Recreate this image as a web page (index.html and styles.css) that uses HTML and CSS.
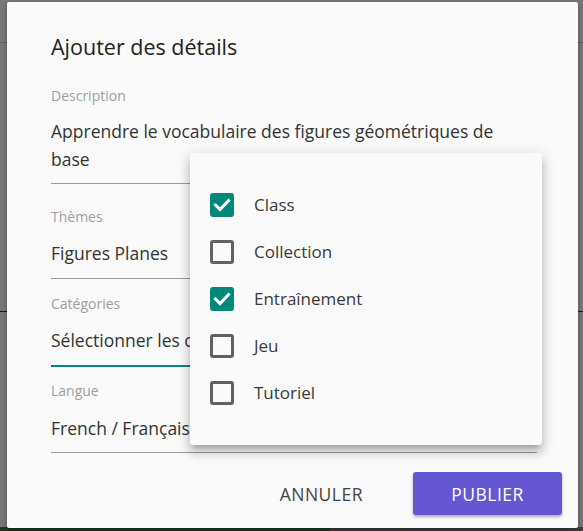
FILE: index.html
```
<!DOCTYPE html>
<html lang="fr">
<head>
<meta charset="utf-8">
<link rel="stylesheet" href="styles.css">
</head>
<body>
<div class="backdrop">
  <div class="bd-header"></div>
  <div class="bd-main"></div>
  <div class="bd-rule"></div>
  <div class="bd-lower"></div>
  <div class="bd-footer"><span class="bd-green"></span></div>
</div>

<div class="dialog">
  <h2 class="title">Ajouter des détails</h2>
  <div class="fields">
    <div class="field field-desc">
      <div class="label">Description</div>
      <div class="value">Apprendre le vocabulaire des figures géométriques de base</div>
    </div>
    <div class="field field-themes">
      <div class="label">Thèmes</div>
      <div class="value">Figures Planes</div>
    </div>
    <div class="field field-cat focused">
      <div class="label">Catégories</div>
      <div class="value">Sélectionner les catégories</div>
    </div>
    <div class="field field-lang">
      <div class="label">Langue</div>
      <div class="value">French / Français</div>
    </div>
  </div>
  <div class="actions">
    <button class="btn btn-text">ANNULER</button>
    <button class="btn btn-primary">PUBLIER</button>
  </div>

  <div class="menu">
    <div class="item"><span class="box checked"><svg viewBox="0 0 24 24"><polyline points="5.5,12 10,16.5 18.5,7.5"/></svg></span><span class="item-text">Class</span></div>
    <div class="item"><span class="box"></span><span class="item-text">Collection</span></div>
    <div class="item"><span class="box checked"><svg viewBox="0 0 24 24"><polyline points="5.5,12 10,16.5 18.5,7.5"/></svg></span><span class="item-text">Entraînement</span></div>
    <div class="item"><span class="box"></span><span class="item-text">Jeu</span></div>
    <div class="item"><span class="box"></span><span class="item-text">Tutoriel</span></div>
  </div>
</div>
</body>
</html>
```
FILE: styles.css
```
* { box-sizing: border-box; }
html, body { margin: 0; padding: 0; }
body {
  width: 583px;
  height: 531px;
  overflow: hidden;
  background: #767676;
  font-family: "Open Sans", "Noto Sans", sans-serif;
  position: relative;
}

/* obscured page behind the scrim */
.backdrop { display: flex; flex-direction: column; height: 531px; }
.bd-header { height: 43px; border-bottom: 1px solid #5e5e5e; background: #777777; }
.bd-main { height: 268px; }
.bd-rule { height: 1px; background: #151515; }
.bd-lower { flex: 1; }
.bd-footer { height: 4px; background: #3d3d3d; display: flex; }
.bd-green { width: 330px; background: #1d3a1f; }

.dialog {
  position: absolute;
  left: 7px;
  top: 2px;
  width: 571px;
  height: 526px;
  background: #fafafa;
  border-radius: 2px;
  box-shadow: 0 2px 4px rgba(0,0,0,0.35);
  padding: 31px 16px 13px 44px;
  display: flex;
  flex-direction: column;
}

.title {
  margin: 0;
  font-size: 21.5px;
  line-height: 28px;
  font-weight: 500;
  color: #222222;
}

.fields { margin-right: 25px; }

.field { border-bottom: 1px solid #9a9a9a; padding-bottom: 10px; }
.label { font-size: 14px; line-height: 20px; color: #9e9e9e; }
.value { font-size: 17.5px; line-height: 28px; color: #333333; margin-top: 12px; overflow: hidden; }

.field-desc { margin-top: 25px; }
.field-desc .value { margin-top: 11px; padding-right: 14px; }
.field-themes { margin-top: 23px; padding-bottom: 11px; }
.field-cat { margin-top: 15px; padding-bottom: 11px; }
.field-cat .value { white-space: nowrap; max-width: 139px; }
.field-lang { margin-top: 14px; }
.field-lang .value { margin-top: 13px; }
.focused { border-bottom: 2px solid #00897b; }

.actions {
  margin-top: 19px;
  display: flex;
  justify-content: flex-end;
  gap: 11px;
}
.btn {
  height: 43px;
  padding: 0 39px;
  border: none;
  border-radius: 3px;
  font-family: "Open Sans", "Noto Sans", sans-serif;
  font-size: 17.5px;
  letter-spacing: 0.5px;
  background: transparent;
  cursor: pointer;
}
.btn-text { color: #444444; }
.btn-primary {
  background: #6557d2;
  color: #ffffff;
  width: 149px;
  padding: 0;
  box-shadow: 0 2px 3px rgba(0,0,0,0.3);
}

.menu {
  position: absolute;
  left: 183px;
  top: 151px;
  width: 352px;
  height: 292px;
  padding: 28px 0 29px 20px;
  background: #fafafa;
  border-radius: 3px;
  box-shadow: 0 5px 5px -3px rgba(0,0,0,0.2), 0 8px 10px 1px rgba(0,0,0,0.14), 0 3px 14px 2px rgba(0,0,0,0.12);
}
.item { height: 47px; display: flex; align-items: center; gap: 20px; }
.box {
  width: 24px;
  height: 24px;
  border: 3px solid #616161;
  border-radius: 3px;
  display: flex;
}
.box.checked { background: #00897b; border-color: #00897b; }
.box svg { width: 24px; height: 24px; margin: -3px; fill: none; stroke: #ffffff; stroke-width: 3; stroke-linecap: square; }
.item-text { font-size: 17px; color: #3a3a3a; }
```
